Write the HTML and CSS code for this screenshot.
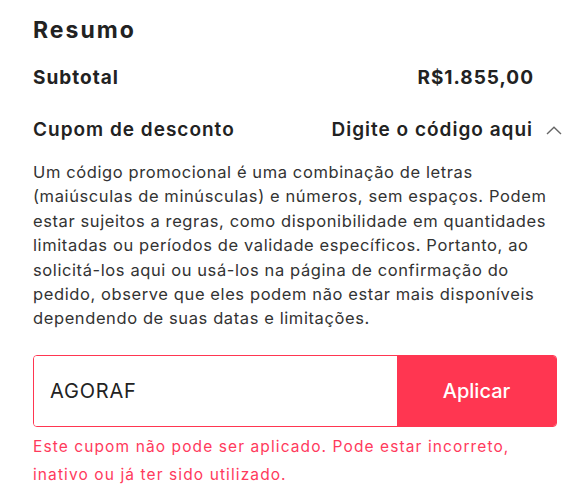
FILE: index.html
```html
<!DOCTYPE html>
<html>
  <head>
    <title>Resumo</title>
    <link rel="stylesheet" href="styles.css">
  </head>
  <body>
    <section class="summary">
      <h2 class="summary-title">Resumo</h2>
      <div class="summary-row subtotal">
        <span>Subtotal</span>
        <span class="amount">R$1.855,00</span>
      </div>
      <div class="summary-row coupon">
        <span>Cupom de desconto</span>
        <span class="coupon-toggle">
          Digite o código aqui
          <svg class="chevron" width="16" height="9" viewBox="0 0 16 9">
            <polyline points="1,8 8,1.2 15,8" fill="none" stroke="#666" stroke-width="1.4"/>
          </svg>
        </span>
      </div>
      <p class="coupon-help">
        Um código promocional é uma combinação de letras
        (maiúsculas de minúsculas) e números, sem espaços. Podem
        estar sujeitos a regras, como disponibilidade em quantidades
        limitadas ou períodos de validade específicos. Portanto, ao
        solicitá-los aqui ou usá-los na página de confirmação do
        pedido, observe que eles podem não estar mais disponíveis
        dependendo de suas datas e limitações.
      </p>
      <form class="coupon-form">
        <input class="coupon-input" type="text" value="AGORAF">
        <button class="coupon-apply" type="button">Aplicar</button>
      </form>
      <p class="coupon-error">
        Este cupom não pode ser aplicado. Pode estar incorreto,
        inativo ou já ter sido utilizado.
      </p>
    </section>
  </body>
</html>
```

FILE: styles.css
```css
* { box-sizing: border-box; }
body {
  margin: 0;
  background: #fff;
  font-family: Inter, "Liberation Sans", sans-serif;
  color: #222;
}

.summary { padding: 14px 20px 0 33px; }

.summary-title {
  margin: 0;
  font-size: 23px;
  font-weight: 700;
  line-height: 32px;
  letter-spacing: 2px;
}

.summary-row {
  display: flex;
  justify-content: space-between;
  align-items: center;
  line-height: 24px;
  font-size: 19px;
  letter-spacing: 1px;
}
.subtotal {
  margin: 20px 23px 0 0;
  font-weight: 700;
}
.coupon {
  margin-top: 28px;
  font-weight: 600;
}
.coupon-toggle {
  display: flex;
  align-items: center;
  gap: 13px;
  margin-right: -5px;
}
.chevron { display: block; }

.coupon-help {
  margin: 18px 0 0;
  font-size: 16.5px;
  line-height: 24.4px;
  letter-spacing: 0.6px;
  color: #333;
}

.coupon-form {
  display: flex;
  height: 72px;
  margin: 24px 0 0;
  border: 1px solid #ff3651;
  border-radius: 4px;
  overflow: hidden;
}
.coupon-input {
  flex: 1;
  min-width: 0;
  border: 0;
  outline: none;
  padding: 0 16px;
  font-family: inherit;
  font-size: 20px;
  letter-spacing: 0.8px;
  color: #222;
}
.coupon-apply {
  width: 159px;
  border: 0;
  background: #ff3651;
  color: #fff;
  font-family: inherit;
  font-size: 20px;
  font-weight: 500;
}

.coupon-error {
  margin: 6px 0 0;
  font-size: 15.5px;
  line-height: 28px;
  letter-spacing: 1.1px;
  color: #ff3a5c;
}
```
